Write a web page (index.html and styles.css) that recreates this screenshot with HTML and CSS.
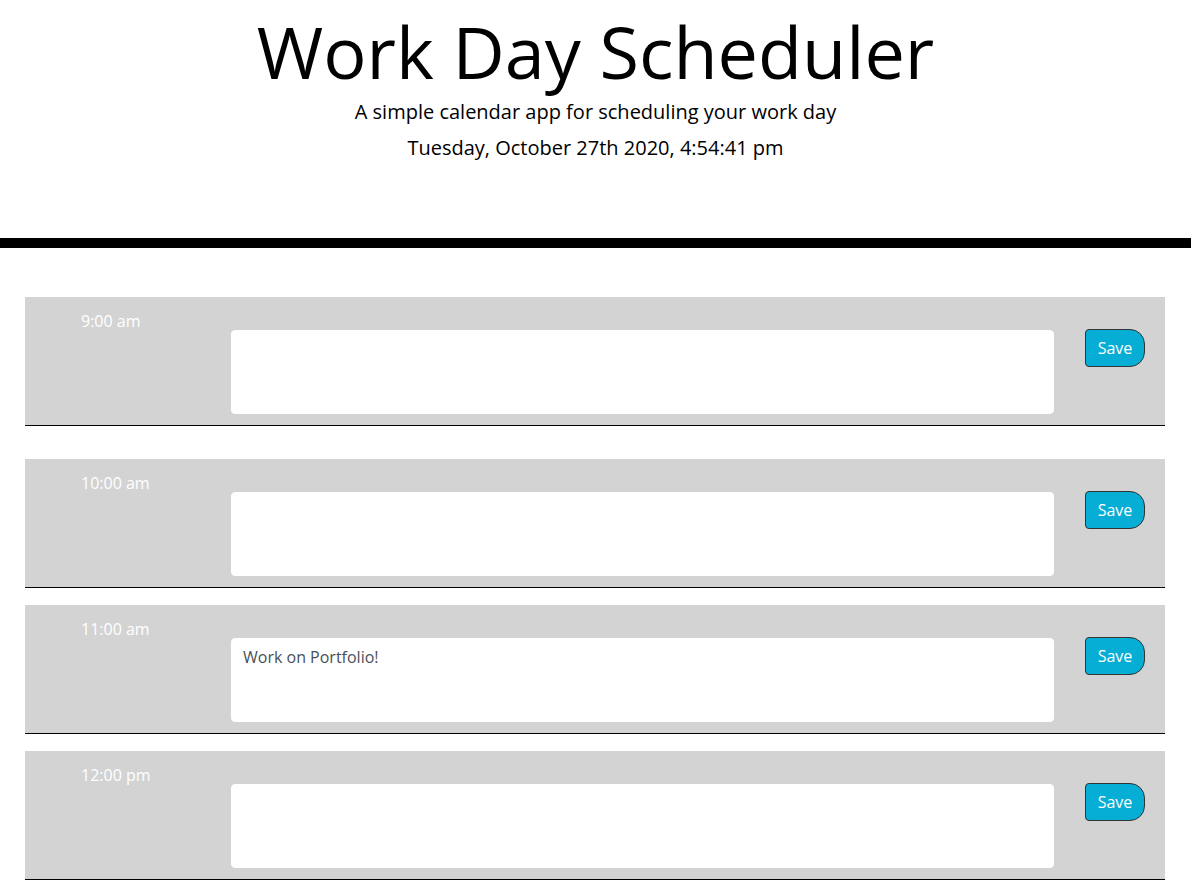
FILE: index.html
```html
<!DOCTYPE html>
<html lang="en">
<head>
<meta charset="utf-8">
<title>Work Day Scheduler</title>
<link rel="stylesheet" href="styles.css">
</head>
<body>
<header class="jumbotron">
  <h1 class="title">Work Day Scheduler</h1>
  <p class="lead">A simple calendar app for scheduling your work day</p>
  <p class="lead current-day">Tuesday, October 27th 2020, 4:54:41 pm</p>
</header>
<main class="container">
  <div class="time-block first">
    <div class="hour">9:00 am</div>
    <textarea class="description"></textarea>
    <button class="save-btn">Save</button>
  </div>
  <div class="time-block">
    <div class="hour">10:00 am</div>
    <textarea class="description"></textarea>
    <button class="save-btn">Save</button>
  </div>
  <div class="time-block">
    <div class="hour">11:00 am</div>
    <textarea class="description">Work on Portfolio!</textarea>
    <button class="save-btn">Save</button>
  </div>
  <div class="time-block">
    <div class="hour">12:00 pm</div>
    <textarea class="description"></textarea>
    <button class="save-btn">Save</button>
  </div>
</main>
</body>
</html>
```
FILE: styles.css
```css
* { box-sizing: border-box; }
html, body { margin: 0; padding: 0; }
body {
  font-family: "Open Sans", "Liberation Sans", sans-serif;
  color: #000;
  background: #fff;
  line-height: 1.5;
}
.jumbotron {
  text-align: center;
  border-bottom: 10px solid #000;
  padding: 8px 0 69px;
  margin-bottom: 49px;
}
.title {
  font-size: 72px;
  font-weight: 400;
  line-height: 1.2;
  margin: 0 0 3px;
}
.lead {
  font-size: 20px;
  font-weight: 400;
  margin: 0 0 6px;
  line-height: 1.5;
}
.container {
  width: 1140px;
  margin: 0 0 0 25px;
  padding-bottom: 20px;
}
.time-block {
  display: flex;
  align-items: flex-start;
  height: 129px;
  background: #d3d3d3;
  border-bottom: 1px solid #000;
  margin-bottom: 17px;
}
.time-block.first { margin-bottom: 33px; }
.hour {
  width: 206px;
  padding-left: 56px;
  padding-top: 14px;
  color: #fff;
  font-size: 16px;
  line-height: 20px;
}
.description {
  width: 823px;
  height: 84px;
  margin-top: 33px;
  border: 1px solid #fff;
  border-radius: 4px;
  background: #fff;
  resize: none;
  padding: 6px 11px;
  font-family: "Open Sans", "Liberation Sans", sans-serif;
  font-size: 16px;
  line-height: 1.5;
  color: #495057;
  outline: none;
}
.save-btn {
  margin-left: 31px;
  margin-top: 32px;
  width: 60px;
  height: 38px;
  background: #06aed5;
  color: #fff;
  border: 1px solid #333;
  border-radius: 4px 15px 15px 4px;
  font-family: "Open Sans", "Liberation Sans", sans-serif;
  font-size: 16px;
  padding: 0;
  cursor: pointer;
}
```
